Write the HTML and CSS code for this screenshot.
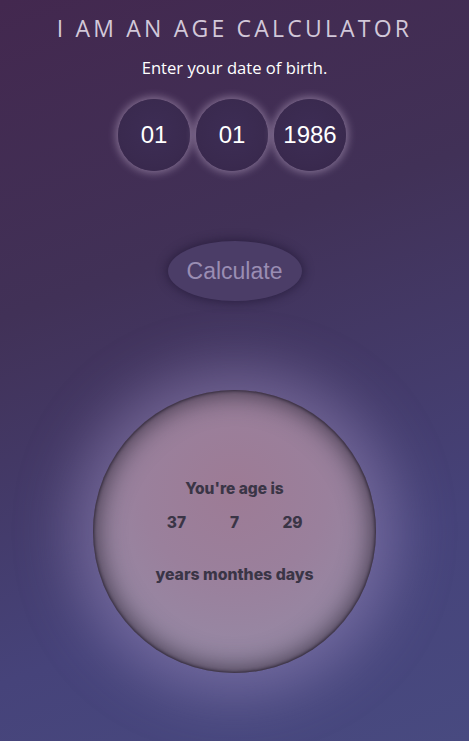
FILE: index.html
```html
<!DOCTYPE html>
<html lang="en">
<head>
<meta charset="utf-8">
<title>Age Calculator</title>
<link rel="stylesheet" href="styles.css">
</head>
<body>
<main class="page">
  <h1 class="title">I AM AN AGE CALCULATOR</h1>
  <p class="subtitle">Enter your date of birth.</p>
  <div class="inputs">
    <input class="dob" type="text" value="01">
    <input class="dob" type="text" value="01">
    <input class="dob" type="text" value="1986">
  </div>
  <button class="calc" type="button">Calculate</button>
  <section class="result">
    <p class="result-head">You're age is</p>
    <div class="nums">
      <span>37</span><span>7</span><span>29</span>
    </div>
    <p class="labels">years monthes days</p>
  </section>
</main>
</body>
</html>
```

FILE: styles.css
```css
html, body {
  margin: 0;
  padding: 0;
  height: 100%;
}
body {
  background: linear-gradient(160deg, #43284f 0%, #413157 35%, #46437a 75%, #484a80 100%);
  font-family: "Open Sans", "Noto Sans", sans-serif;
  overflow: hidden;
}
.page {
  display: flex;
  flex-direction: column;
  align-items: center;
  padding-top: 14px;
}
.title {
  margin: 0;
  font-family: "Open Sans", sans-serif;
  font-weight: 400;
  font-size: 23px;
  line-height: 28px;
  letter-spacing: 3.2px;
  color: #d2c8d9;
}
.subtitle {
  margin: 16px 0 0;
  font-size: 16.6px;
  line-height: 20px;
  color: #ffffff;
}
.inputs {
  margin-top: 21px;
  margin-right: 5px;
  display: flex;
  gap: 6px;
}
.dob {
  width: 72px;
  height: 72px;
  box-sizing: border-box;
  border: none;
  border-radius: 50%;
  padding: 0;
  text-align: center;
  font-family: "Liberation Sans", Arial, sans-serif;
  font-size: 24px;
  color: #ffffff;
  background: radial-gradient(circle at 50% 45%, #3d2d55 0%, #3a2a4f 60%, #36264a 100%);
  box-shadow: 0 0 8px 2px rgba(215, 195, 225, 0.45);
  outline: none;
}
.calc {
  margin-top: 70px;
  width: 134px;
  height: 60px;
  border: none;
  border-radius: 50%;
  background: #4b3d67;
  color: #9a8db3;
  font-family: "Liberation Sans", Arial, sans-serif;
  font-size: 23px;
  box-shadow: 0 0 10px 2px rgba(30, 20, 50, 0.55);
  padding: 0;
}
.result {
  margin-top: 89px;
  width: 283px;
  height: 283px;
  border-radius: 50%;
  display: flex;
  flex-direction: column;
  align-items: center;
  box-sizing: border-box;
  padding-top: 89px;
  background: radial-gradient(circle at 50% 35%, #9d7b95 0%, #9a809c 40%, #9689a5 75%, #9488a4 100%);
  box-shadow:
    inset 0 0 3px 1px rgba(45, 38, 55, 0.9),
    inset 0 0 28px 2px rgba(50, 40, 58, 0.95),
    0 0 55px 22px rgba(185, 165, 215, 0.38);
  color: #3a3546;
  font-family: "Inter", sans-serif;
  font-weight: 800;
  font-size: 15.5px;
}
.result-head {
  margin: 0;
  line-height: 20px;
}
.nums {
  margin-top: 14px;
  display: grid;
  grid-template-columns: repeat(3, 58px);
  justify-items: center;
  line-height: 20px;
}
.labels {
  margin: 32px 0 0;
  line-height: 20px;
  font-size: 15.8px;
}
```
